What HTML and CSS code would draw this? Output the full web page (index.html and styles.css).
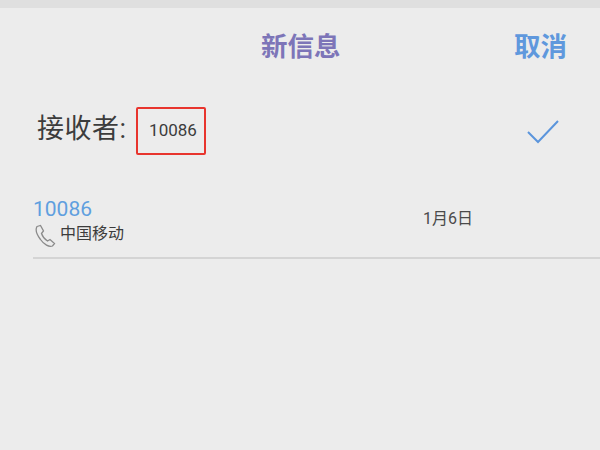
FILE: index.html
```html
<!DOCTYPE html>
<html lang="zh-CN">
<head>
  <meta charset="UTF-8">
  <title>新信息</title>
  <link rel="stylesheet" href="styles.css">
</head>
<body>
  <!-- Top bar -->
  <div class="topbar"></div>

  <div class="header">
    <div class="title">新信息</div>
    <div class="cancel">取消</div>
  </div>

  <!-- Recipient -->
  <div class="recipient">
    <div class="label">接收者:</div>
    <div class="number-box">10086</div>
    <svg class="check" width="34" height="28" viewBox="0 0 34 28">
      <path d="M1 15 L11 25 L31 4" fill="none" stroke="#5b95dc" stroke-width="2"/>
    </svg>
  </div>

  <!-- Contact -->
  <div class="contact">
    <div class="contact-left">
      <div class="contact-number">10086</div>
      <div class="contact-name">
        <svg class="phone" width="22" height="24" viewBox="0 0 22 24">
          <path d="M3 2.5 L6.5 1.5 L9.5 7 L7.5 9.5 C8.5 12.5 11 15.5 13.5 17 L16 15.5 L20.5 19.5 L18.5 22 C15 23.5 10 20.5 6.5 15.5 C3 11 1 6 3 2.5 Z" fill="none" stroke="#8a8a8a" stroke-width="1.3"/>
        </svg>
        <span>中国移动</span>
      </div>
    </div>
    <div class="contact-date">1月6日</div>
  </div>
</body>
</html>
```

FILE: styles.css
```css
body {
  margin: 0;
  width: 600px;
  height: 450px;
  overflow: hidden;
  background-color: #ececec;
  font-family: Roboto, "Noto Sans CJK SC", sans-serif;
}

.topbar {
  height: 8px;
  background-color: #dfdfdf;
}

.header {
  display: flex;
  justify-content: space-between;
  height: 62px;
  padding: 20px 33px 0 261px;
  box-sizing: border-box;
  font-size: 26.5px;
  line-height: 38px;
  font-weight: 700;
}

.title {
  color: #7d75b8;
}

.cancel {
  color: #5f98dd;
}

.recipient {
  display: flex;
  align-items: center;
  height: 48px;
  margin-top: 37px;
  padding-left: 37px;
}

.label {
  width: 99px;
  height: 48px;
  font-size: 27px;
  line-height: 44px;
  letter-spacing: 0.5px;
  color: #3c3c3c;
}

.number-box {
  width: 62px;
  height: 44px;
  padding-left: 4px;
  border: 2px solid #e8352e;
  border-radius: 2px;
  font-size: 17px;
  line-height: 43px;
  text-align: center;
  color: #3c3c3c;
}

.check {
  margin-left: 321px;
}

.contact {
  display: flex;
  height: 67px;
  margin: 37px 0 0 33px;
  border-bottom: 2px solid #d4d4d4;
  box-sizing: border-box;
}

.contact-left {
  width: 390px;
}

.contact-number {
  height: 27px;
  font-size: 21px;
  line-height: 34px;
  color: #5f9fdf;
}

.contact-name {
  display: flex;
  height: 26px;
  font-size: 16px;
  line-height: 30px;
  color: #3c3c3c;
}

.phone {
  margin: 5px 4px 0 1px;
}

.contact-date {
  padding-top: 15px;
  font-size: 16px;
  line-height: 24px;
  color: #4a4a4a;
}
```
